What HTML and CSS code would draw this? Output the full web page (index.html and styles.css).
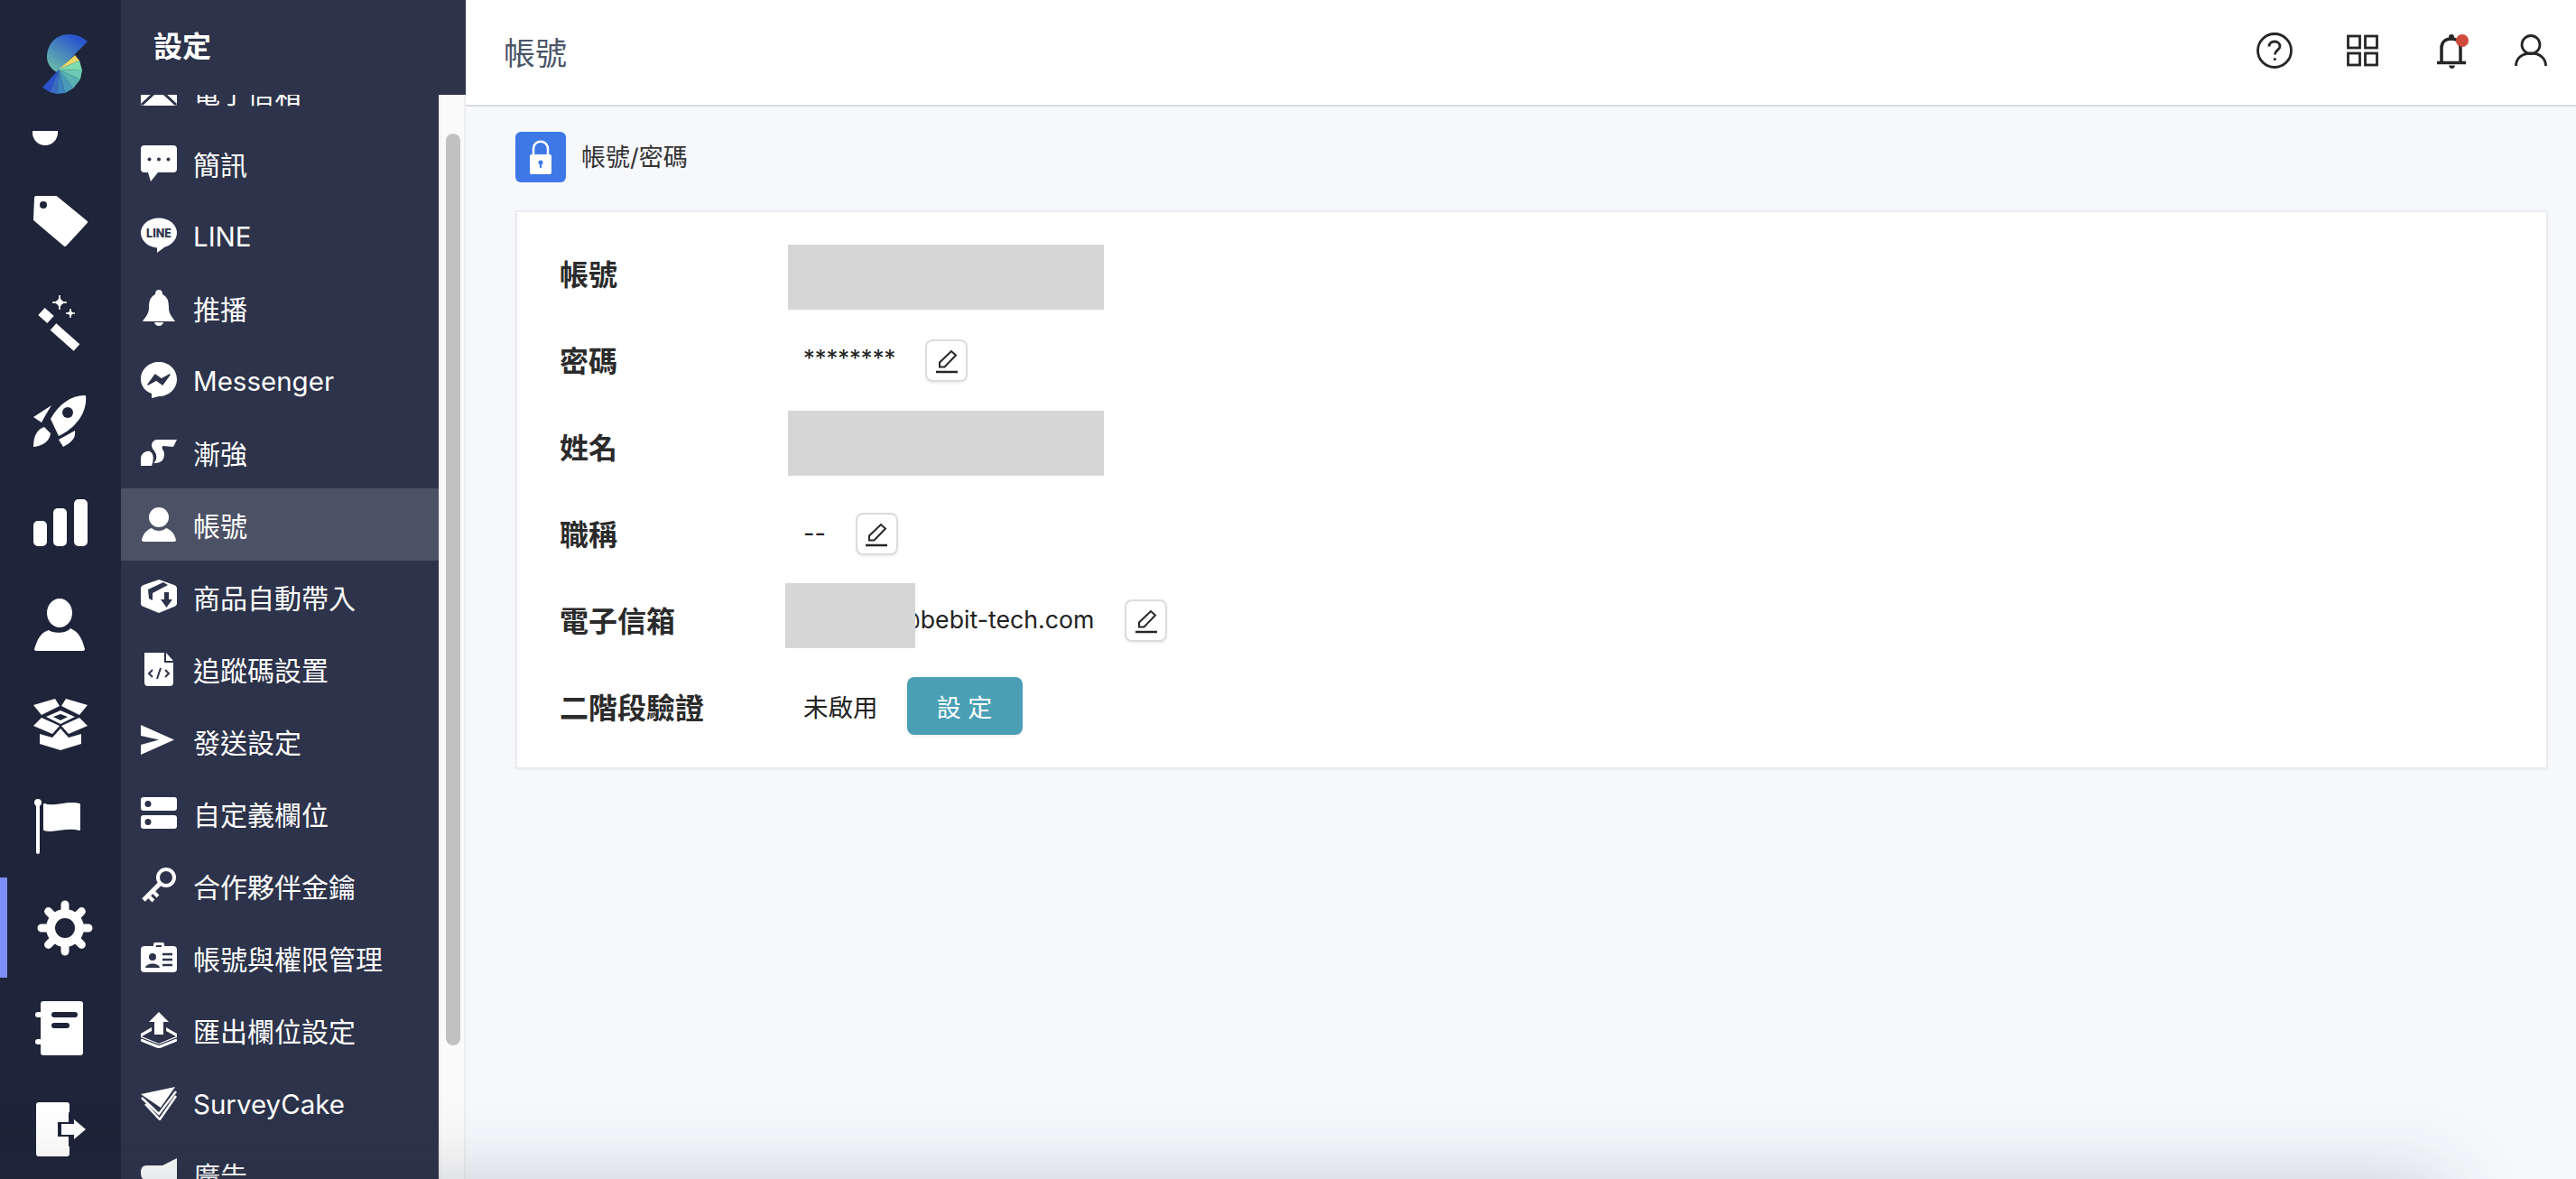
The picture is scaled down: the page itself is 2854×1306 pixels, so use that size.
FILE: index.html
```html
<!DOCTYPE html>
<html lang="zh-Hant">
<head>
<meta charset="utf-8">
<title>帳號</title>
<link rel="stylesheet" href="styles.css">
</head>
<body>
<div class="app">
  <nav class="rail">
    <div class="rail-logo">
      <svg class="logo" viewBox="0 0 134 105" width="134" height="105">
        <defs><linearGradient id="lg" x1="0.85" y1="0.05" x2="0.2" y2="0.95"><stop offset="0.1" stop-color="#2a55cf"/><stop offset="1" stop-color="#68b7ab"/></linearGradient></defs>
        <path d="M97 46C90 40 83 38 76 38C62 38 52 49 52 63C52 70 56 76 63 80L83 60Z" fill="url(#lg)"/>
        <path d="M65 77L83 61L88 67Z" fill="#ecd66b"/><path d="M65 77L88 67L91 78Z" fill="#7ddcb0"/><path d="M65 77L91 78L89 88Z" fill="#6ccab2"/><path d="M65 77L89 88L81 98Z" fill="#58b1b3"/><path d="M65 77L81 98L72 103Z" fill="#4a9bbb"/><path d="M65 77L72 103L63 104Z" fill="#3f82c0"/><path d="M65 77L63 104L55 102Z" fill="#3a6cc4"/><path d="M65 77L55 102L47 97Z" fill="#2a52cc"/>
      </svg>
    </div>
    <div class="rail-scroll">
      <a class="rail-item"><svg viewBox="0 0 60 60" class="ri"><circle cx="13" cy="42" r="14"/></svg></a>
      <a class="rail-item"><svg viewBox="0 0 60 60" class="ri"><path d="M3 3H25L58 30L35 55L2 27Z" stroke="#fff" stroke-width="4" stroke-linejoin="round"/><circle cx="11" cy="11" r="4" class="dk"/></svg></a>
      <a class="rail-item"><svg viewBox="0 0 60 60" class="ri"><path d="M9 17L19 26" class="ln" stroke-width="11"/><path d="M22 34L48 57" class="ln" stroke-width="10"/><path d="M29 -1Q29 7 37 7Q29 7 29 15Q29 7 21 7Q29 7 29 -1Z" stroke="#fff"/><path d="M41 14Q41 19 46 19Q41 19 41 24Q41 19 36 19Q41 19 41 14Z" stroke="#fff"/></svg></a>
      <a class="rail-item"><svg viewBox="0 0 60 60" class="ri ri--up"><path d="M58 1C44 0 29 9 19 27L28 46C47 37 60 20 58 1Z"/><circle cx="38" cy="20" r="6" class="dk"/><path d="M0 25L20 12L14 22L9 31Z"/><path d="M0 58C0 45 5 38 12 36L19 43C18 52 10 57 0 58Z"/><path d="M28 50L46 40C47 47 44 52 33 58Z"/></svg></a>
      <a class="rail-item"><svg viewBox="0 0 60 60" class="ri ri--up"><rect x="0" y="29" width="15" height="28" rx="5"/><rect x="22" y="15" width="15" height="42" rx="5"/><rect x="45" y="5" width="15" height="52" rx="5"/></svg></a>
      <a class="rail-item"><svg viewBox="0 0 60 60" class="ri"><ellipse cx="29" cy="16" rx="14" ry="16"/><path d="M1 56C5 44 8 38 17 35C22 39 36 39 41 33C50 37 54 44 57 56C57 57 56 58 55 58H3C2 58 1 57 1 56Z"/></svg></a>
      <a class="rail-item"><svg viewBox="0 0 60 60" class="ri"><path d="M0 7L24 0L29 8L9 18Z"/><path d="M60 7L36 0L31 8L51 18Z"/><path d="M14 20L30 13L46 20L30 28Z"/><path d="M22 20L30 17L38 20L30 24Z" class="dk"/><path d="M0 30L9 21L29 30L21 39Z"/><path d="M60 30L51 21L31 30L39 39Z"/><path d="M7 39L21 43L30 33L39 43L53 39V50L30 57L7 50Z"/></svg></a>
      <a class="rail-item"><svg viewBox="0 0 60 60" class="ri ri--flag"><rect x="2" y="3" width="4" height="57" rx="2"/><circle cx="4" cy="3" r="4"/><path d="M11 5C22 10 36 1 50 5V33C36 28 22 37 11 33Z" stroke="#fff" stroke-width="2" stroke-linejoin="round"/></svg></a>
      <a class="rail-item rail-item--on"><svg viewBox="0 0 60 60" class="ri ri--gear"><path d="M30 4V56M4 30H56M11.600 11.600L48.400 48.400M11.600 48.400L48.400 11.600" stroke="#fff" stroke-width="9" stroke-linecap="round"/><circle cx="30" cy="30" r="21"/><circle cx="30" cy="30" r="11" class="dk"/></svg></a>
      <a class="rail-item"><svg viewBox="0 0 60 60" class="ri ri--note"><rect x="6" y="0" width="47" height="60" rx="3"/><rect x="0" y="12" width="8" height="6" rx="3"/><rect x="0" y="42" width="8" height="6" rx="3"/><rect x="18" y="12" width="29" height="6" rx="3" class="dk"/><rect x="18" y="24" width="20" height="6" rx="3" class="dk"/></svg></a>
      <a class="rail-item"><svg viewBox="0 0 60 60" class="ri ri--exit"><rect x="0" y="0" width="37" height="60" rx="3"/><path d="M26 24H38V15L56 30L38 45V36H26Z" class="dk" stroke="#1e2439" stroke-width="4"/><path d="M28 24H42V19L55 30L42 41V36H28Z"/></svg></a>
    </div>
  </nav>

  <aside class="side">
    <div class="side-head">設定</div>
    <div class="side-body">
      <ul class="menu">
        <li class="menu-item"><svg viewBox="0 0 40 40" class="mi"><path d="M2 4H38Q40 4 40 6V34Q40 36 38 36H2Q0 36 0 34V6Q0 4 2 4Z"/><path d="M1 35L14 23M39 35L26 23M2 7L20 21L38 7" class="dl" stroke-width="3"/></svg><span>電子信箱</span></li>
        <li class="menu-item"><svg viewBox="0 0 40 40" class="mi"><path d="M4 0H36Q40 0 40 4V26Q40 30 36 30H19L11 40L8 30H4Q0 30 0 26V4Q0 0 4 0Z"/><circle cx="9.500" cy="15.500" r="2" class="dk2"/><circle cx="20" cy="15.500" r="2" class="dk2"/><circle cx="30.500" cy="15.500" r="2" class="dk2"/></svg><span>簡訊</span></li>
        <li class="menu-item"><svg viewBox="0 0 40 40" class="mi"><ellipse cx="20" cy="17" rx="20" ry="16.500"/><path d="M18 31L18 39L30 30Z"/><text x="20" y="21.500" class="mi-line">LINE</text></svg><span class="lat">LINE</span></li>
        <li class="menu-item"><svg viewBox="0 0 40 40" class="mi"><path d="M20 0Q24 0 24 5C30 8 31 13 31 20C31 27 35 30 38 35H2C5 30 9 27 9 20C9 13 10 8 16 5Q16 0 20 0Z"/><path d="M15 36H25Q24 40 20 40Q16 40 15 36Z"/></svg><span>推播</span></li>
        <li class="menu-item"><svg viewBox="0 0 40 40" class="mi"><path d="M20 0C31 0 40 8 40 19C40 30 31 38 20 38L12 40V35C4 32 0 26 0 19C0 8 9 0 20 0Z"/><path d="M8 25L16 14L23 19L32 14L24 25L17 20Z" class="dk2" stroke="#2d334a" stroke-width="1.500" stroke-linejoin="round"/></svg><span class="lat">Messenger</span></li>
        <li class="menu-item"><svg viewBox="0 0 40 40" class="mi"><path d="M0 35V26C1 20 7 18 10 19C14 21 15 27 12 35Z"/><path d="M13 16C11 12 12 7 18 6H40L36 14L25 13C23 13 23 16 25 18C27 22 26 29 21 31C18 32 16 32 14 32C19 28 18 21 13 16Z"/></svg><span>漸強</span></li>
        <li class="menu-item menu-item--on"><svg viewBox="0 0 40 40" class="mi"><circle cx="20" cy="12" r="11"/><path d="M1 37C3 30 6 26 12 24C16 28 24 28 28 24C34 26 37 30 39 37C39 38 38 39 37 39H3C2 39 1 38 1 37Z"/></svg><span>帳號</span></li>
        <li class="menu-item"><svg viewBox="0 0 40 40" class="mi"><path d="M20 1L37 7Q40 8 40 11V27Q40 30 37 31L20 38L3 31Q0 30 0 27V11Q0 8 3 7Z"/><path d="M8 12L25 4L30 7L13 16V24L9 22Z" class="dk2"/><path d="M26 15H31V23H35L28.500 32L22 23H26Z" class="dk2"/></svg><span>商品自動帶入</span></li>
        <li class="menu-item"><svg viewBox="0 0 40 40" class="mi"><path d="M4 2H26V13H36V35Q36 39 32 39H8Q4 39 4 35Z"/><path d="M28 2L36 11H28Z"/><path d="M13 21L9 25L13 29M27 21L31 25L27 29M22 19L18 31" class="dl" stroke-width="2"/></svg><span>追蹤碼設置</span></li>
        <li class="menu-item"><svg viewBox="0 0 40 40" class="mi"><path d="M0 2L37 18.500L0 35V24L20 18.500L0 14Z"/></svg><span>發送設定</span></li>
        <li class="menu-item"><svg viewBox="0 0 40 40" class="mi"><rect y="2" width="40" height="15" rx="3"/><rect y="22" width="40" height="15" rx="3"/><circle cx="8" cy="9.500" r="3.500" class="dk2"/><circle cx="8" cy="29.500" r="3.500" class="dk2"/></svg><span>自定義欄位</span></li>
        <li class="menu-item"><svg viewBox="0 0 40 40" class="mi"><circle cx="28" cy="11" r="9" class="wl" stroke-width="4"/><path d="M21 18L3 36" class="wl" stroke-width="5"/><path d="M8 31L14 37M13 26L19 32" class="wl" stroke-width="4"/></svg><span>合作夥伴金鑰</span></li>
        <li class="menu-item"><svg viewBox="0 0 40 40" class="mi"><rect y="7" width="40" height="29" rx="4"/><rect x="14" y="3" width="12" height="7" rx="2"/><rect x="17" y="6" width="6" height="2" class="dk2"/><circle cx="13" cy="19" r="4" class="dk2"/><path d="M5 31C6 25 20 25 21 31Z" class="dk2"/><path d="M24 16H35M24 22H35M24 28H35" class="dl" stroke-width="2.500"/></svg><span>帳號與權限管理</span></li>
        <li class="menu-item"><svg viewBox="0 0 40 40" class="mi"><path d="M20 0L31 11H25V25H15V11H9Z"/><path d="M12 17V21L1 27L20 35L39 27L28 21V17L40 24V28L20 36L0 28V24Z"/><path d="M0 31L20 39L40 31" class="wl" stroke-width="3"/></svg><span>匯出欄位設定</span></li>
        <li class="menu-item"><svg viewBox="0 0 40 40" class="mi"><path d="M0 11L38 3L22 26Z"/><path d="M1 15L20 33L39 8M5 22L21 39L39 13" class="wl" stroke-width="2.500"/></svg><span class="lat lat--low">SurveyCake</span></li>
        <li class="menu-item"><svg viewBox="0 0 40 40" class="mi"><path d="M6 10H24L40 2V32L24 26H14L18 38H10L6 26Q0 26 0 18Q0 10 6 10Z"/></svg><span>廣告</span></li>
      </ul>
      <div class="scrollbar"><div class="scrollbar-thumb"></div></div>
    </div>
  </aside>

  <main class="main">
    <header class="topbar">
      <h1 class="page-title">帳號</h1>
      <div class="top-icons">
        <svg viewBox="0 0 40 40" class="ti"><circle cx="20" cy="20" r="18.500"/><path d="M14 15.500C14 12 17 10 20 10C23.500 10 26 12.300 26 15.300C26 19.500 20.500 19.500 20.500 24.500"/><circle cx="20.300" cy="29.500" r="1.600" class="ti-dot"/></svg>
        <svg viewBox="0 0 40 40" class="ti"><rect x="3.500" y="4" width="13" height="13"/><rect x="22.500" y="4" width="13" height="13"/><rect x="3.500" y="23" width="13" height="13"/><rect x="22.500" y="23" width="13" height="13"/></svg>
        <span class="bell"><svg viewBox="0 0 40 40" class="ti"><path d="M9 33V17C9 11 13 7 20 7C26 7 30 11 30 17V33" stroke-width="3.500"/><path d="M4 33.500H36" stroke-width="3.500"/><path d="M17 36.500H24Q23 40 20.500 40Q18 40 17 36.500Z" class="ti-dot"/><circle cx="20" cy="5" r="3" class="ti-dot"/></svg><span class="bell-dot"></span></span>
        <svg viewBox="0 0 40 40" class="ti ti--user"><circle cx="20" cy="13.500" r="10"/><path d="M3.500 37C3.500 28.500 10 23 20 23C30 23 36.500 28.500 36.500 37"/></svg>
      </div>
    </header>
    <div class="content">
      <div class="section-head">
        <span class="lock"><svg viewBox="0 0 56 56" width="56" height="56"><path d="M20 27V19C20 8 36 8 36 19V27" fill="none" stroke="#fff" stroke-width="2.500"/><rect x="16" y="25" width="24" height="22" rx="2" fill="#fff"/><circle cx="28" cy="34" r="2.500" fill="#3e78e6"/><rect x="27" y="34" width="2" height="6" fill="#3e78e6"/></svg></span>
        <span class="section-title">帳號/密碼</span>
      </div>
      <section class="card">
        <div class="row"><div class="label">帳號</div><div class="value"><div class="redact redact--a"></div></div></div>
        <div class="row"><div class="label">密碼</div><div class="value"><span class="text text--stars">********</span><button class="edit"><svg viewBox="0 0 30 30" class="pen"><path d="M7 21.500V16.500L20 4L25 8.500L12.500 21.500Z"/><path d="M3 27H27" stroke-width="2.500"/></svg></button></div></div>
        <div class="row"><div class="label">姓名</div><div class="value"><div class="redact redact--b"></div></div></div>
        <div class="row"><div class="label">職稱</div><div class="value"><span class="text">--</span><button class="edit"><svg viewBox="0 0 30 30" class="pen"><path d="M7 21.500V16.500L20 4L25 8.500L12.500 21.500Z"/><path d="M3 27H27" stroke-width="2.500"/></svg></button></div></div>
        <div class="row"><div class="label">電子信箱</div><div class="value"><div class="redact redact--mail"></div><span class="text text--mail">@bebit-tech.com</span><button class="edit edit--mail"><svg viewBox="0 0 30 30" class="pen"><path d="M7 21.500V16.500L20 4L25 8.500L12.500 21.500Z"/><path d="M3 27H27" stroke-width="2.500"/></svg></button></div></div>
        <div class="row"><div class="label">二階段驗證</div><div class="value"><span class="text text--state">未啟用</span><button class="btn">設 定</button></div></div>
      </section>
    </div>
  </main>
  <div class="fade"></div>
</div>
</body>
</html>
```

FILE: styles.css
```css
* { box-sizing: border-box; }
html, body { margin: 0; padding: 0; height: 100%; overflow: hidden; }
body { font-family: Inter, "Noto Sans CJK TC", sans-serif; background: #f6f8fc; color: #262626; }
.app { position: relative; display: flex; width: 2854px; height: 1306px; overflow: hidden; }

/* rail */
.rail { flex: 0 0 134px; background: #1e2439; display: flex; flex-direction: column; height: 100%; }
.rail-logo { flex: 0 0 145px; }
.logo { display: block; }
.rail-scroll { flex: 1; min-height: 0; overflow: hidden; }
.rail-item { display: flex; align-items: center; justify-content: center; height: 111.6px; position: relative; }
.rail-item:first-child { margin-top: -66px; }
.rail-item--on::before { content: ""; position: absolute; left: 0; top: 0; bottom: 0; width: 8px; background: #7d8df5; }
.ri { width: 60px; height: 60px; fill: #fff; overflow: visible; }
.ri--up { margin-bottom: 6px; }
.ri--gear { margin-left: 9px; }
.ri--flag { margin-left: 2px; }
.ri--note { margin-left: 4px; }
.ri--exit { margin-left: 5px; }
.dk { fill: #1e2439; }
.ln { stroke: #fff; fill: none; }

/* side */
.side { flex: 0 0 382px; display: flex; flex-direction: column; background: #2d334a; height: 100%; }
.side-head { flex: 0 0 105px; padding: 33px 0 0 36px; font-size: 32px; line-height: 38px; font-weight: 700; color: #fff; }
.side-body { flex: 1; display: flex; min-height: 0; overflow: hidden; }
.menu { list-style: none; margin: -44px 0 0; padding: 0; flex: 0 0 352px; min-width: 0; }
.menu-item { display: flex; align-items: center; gap: 18px; height: 80px; padding-left: 22px; color: #fff; font-size: 30px; }
.menu-item--on { background: #4c5265; }
.lat { font-size: 29.500px; margin-top: 2px; }
.lat--low { margin-top: 4px; }
.mi { width: 40px; height: 40px; flex: none; fill: #fff; }
.dk2 { fill: #2d334a; }
.dl { stroke: #2d334a; fill: none; }
.wl { stroke: #fff; fill: none; }
.mi-line { font-family: Inter, sans-serif; font-size: 12.500px; font-weight: 800; fill: #2d334a; text-anchor: middle; }
.scrollbar { flex: 0 0 30px; background: #fafafa; padding: 43px 4px 0 6px; border-left: 2px solid #eee; border-right: 2px solid #eee; }
.scrollbar-thumb { height: 1010px; background: #c1c1c1; border-radius: 8px; }

/* main */
.main { flex: 1; min-width: 0; display: flex; flex-direction: column; }
.topbar { flex: 0 0 118px; background: #fff; border-bottom: 2px solid #d8dae0; display: flex; align-items: center; justify-content: space-between; padding: 0 30px 4px 42px; }
.page-title { margin: 0; font-size: 35px; font-weight: 400; color: #4a5568; }
.top-icons { display: flex; align-items: center; gap: 58px; }
.ti { width: 40px; height: 40px; display: block; fill: none; stroke: #262626; stroke-width: 2.800; }
.ti-dot { fill: #262626; stroke: none; }
.ti--user { margin-left: -10px; }
.bell { position: relative; display: block; }
.bell-dot { position: absolute; top: 2px; right: 1px; width: 14px; height: 14px; border-radius: 50%; background: #cf4a3c; }

.content { flex: 1; padding: 28px 31px 0 55px; }
.section-head { display: flex; align-items: center; gap: 17px; height: 56px; margin-bottom: 31px; }
.lock { width: 56px; height: 56px; background: #3e78e6; border-radius: 6px; display: block; }
.lock svg { display: block; }
.section-title { font-size: 27px; color: #333; margin-top: -4px; }
.card { background: #fff; border: 2px solid #e9ebf0; border-radius: 2px; padding: 19px 0 20px 47px; box-shadow: 0 1px 2px rgba(0,0,0,.05); }
.row { display: flex; align-items: center; height: 96px; }
.label { flex: 0 0 253px; font-size: 32px; font-weight: 700; color: #2b2b2b; }
.value { display: flex; align-items: center; font-size: 27px; color: #222; }
.text { margin-left: 17px; }
.text--stars { margin-top: -4px; width: 102px; font-size: 25.500px; }
.text--state { font-size: 27.500px; }
.text--mail { position: relative; margin-left: -20px; font-size: 26.700px; }
.redact { background: #d6d6d6; height: 72px; width: 350px; position: relative; z-index: 1; }
.redact--a { margin-top: 10px; }
.redact--b { margin-top: -6px; }
.redact--mail { width: 144px; margin: -8px 0 0 -3px; }
.edit { width: 47px; height: 47px; padding: 0; background: #fff; border: 2px solid #dcdcdc; border-radius: 8px; box-shadow: 0 2px 3px rgba(0,0,0,.06); display: flex; align-items: center; justify-content: center; margin-top: 3px; margin-left: 33px; }
.edit--mail { margin-left: 34px; }
.pen { width: 30px; height: 30px; fill: none; stroke: #262626; stroke-width: 2; }
.btn { margin-left: 32px; width: 128px; height: 64px; background: #4a9fb5; color: #fff; border: 0; border-radius: 8px; font: inherit; font-size: 27px; box-shadow: 0 2px 3px rgba(0,0,0,.06); }

.fade { position: absolute; left: -200px; right: 144px; bottom: -300px; height: 300px; box-shadow: 0 0 80px 0 rgba(40,45,60,.21); pointer-events: none; }
```
